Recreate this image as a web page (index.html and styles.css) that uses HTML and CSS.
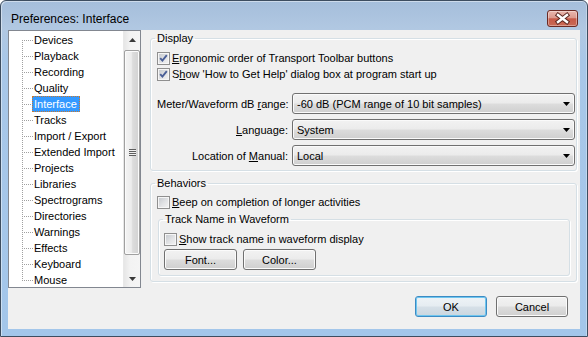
FILE: index.html
```html
<!DOCTYPE html>
<html>
<head>
<meta charset="utf-8">
<title>Preferences: Interface</title>
<link rel="stylesheet" href="styles.css">
</head>
<body>
<div class="window">
  <div class="titlebar">
    <span class="title">Preferences: Interface</span>
    <button class="close" aria-label="Close">
      <svg width="29" height="15" viewBox="0 0 29 15">
        <path d="M10 4 L19 11 M19 4 L10 11" stroke="#5a2620" stroke-width="4.4" stroke-linecap="square" fill="none"/>
        <path d="M10 4 L19 11 M19 4 L10 11" stroke="#ffffff" stroke-width="2.4" stroke-linecap="square" fill="none"/>
      </svg>
    </button>
  </div>
  <div class="client">
    <div class="main">
      <div class="tree">
        <ul class="tree-list">
          <li class="first"><span class="node">Devices</span></li>
          <li><span class="node">Playback</span></li>
          <li><span class="node">Recording</span></li>
          <li><span class="node">Quality</span></li>
          <li><span class="node selected">Interface</span></li>
          <li><span class="node">Tracks</span></li>
          <li><span class="node">Import / Export</span></li>
          <li><span class="node">Extended Import</span></li>
          <li><span class="node">Projects</span></li>
          <li><span class="node">Libraries</span></li>
          <li><span class="node">Spectrograms</span></li>
          <li><span class="node">Directories</span></li>
          <li><span class="node">Warnings</span></li>
          <li><span class="node">Effects</span></li>
          <li><span class="node">Keyboard</span></li>
          <li class="last"><span class="node">Mouse</span></li>
        </ul>
        <div class="scrollbar">
          <div class="sb-btn">
            <svg width="7" height="4" viewBox="0 0 7 4"><polygon points="0,4 7,4 3.5,0" fill="#3a3a3a"/></svg>
          </div>
          <div class="sb-track">
            <div class="sb-thumb"><span class="grip"></span></div>
          </div>
          <div class="sb-btn">
            <svg width="7" height="4" viewBox="0 0 7 4"><polygon points="0,0 7,0 3.5,4" fill="#3a3a3a"/></svg>
          </div>
        </div>
      </div>
      <div class="panel">
        <fieldset class="group display">
          <legend>Display</legend>
          <div class="check-row">
            <span class="checkbox"><svg width="11" height="11" viewBox="0 0 11 11"><path d="M2.2 5.2 L4.4 7.6 L8.8 2.2" stroke="#4a5f97" stroke-width="1.9" fill="none"/></svg></span>
            <span><u>E</u>rgonomic order of Transport Toolbar buttons</span>
          </div>
          <div class="check-row">
            <span class="checkbox"><svg width="11" height="11" viewBox="0 0 11 11"><path d="M2.2 5.2 L4.4 7.6 L8.8 2.2" stroke="#4a5f97" stroke-width="1.9" fill="none"/></svg></span>
            <span>S<u>h</u>ow 'How to Get Help' dialog box at program start up</span>
          </div>
          <div class="combo-grid">
            <span class="combo-label">Meter/Waveform dB <u>r</u>ange:</span>
            <div class="combo"><span>-60 dB (PCM range of 10 bit samples)</span><svg class="combo-arrow" width="7" height="4" viewBox="0 0 7 4"><polygon points="0,0 7,0 3.5,4" fill="#000"/></svg></div>
            <span class="combo-label"><u>L</u>anguage:</span>
            <div class="combo"><span>System</span><svg class="combo-arrow" width="7" height="4" viewBox="0 0 7 4"><polygon points="0,0 7,0 3.5,4" fill="#000"/></svg></div>
            <span class="combo-label">Location of <u>M</u>anual:</span>
            <div class="combo"><span>Local</span><svg class="combo-arrow" width="7" height="4" viewBox="0 0 7 4"><polygon points="0,0 7,0 3.5,4" fill="#000"/></svg></div>
          </div>
        </fieldset>
        <fieldset class="group behaviors">
          <legend>Behaviors</legend>
          <div class="check-row">
            <span class="checkbox"></span>
            <span><u>B</u>eep on completion of longer activities</span>
          </div>
          <fieldset class="group inner">
            <legend>Track Name in Waveform</legend>
            <div class="check-row">
              <span class="checkbox"></span>
              <span><u>S</u>how track name in waveform display</span>
            </div>
            <div class="btn-row">
              <button class="btn">Font...</button>
              <button class="btn">Color...</button>
            </div>
          </fieldset>
        </fieldset>
      </div>
    </div>
    <div class="footer">
      <button class="btn default">OK</button>
      <button class="btn">Cancel</button>
    </div>
  </div>
</div>
</body>
</html>
```

FILE: styles.css
```css
* { box-sizing: border-box; }

html, body {
  margin: 0;
  padding: 0;
}

body {
  width: 588px;
  height: 337px;
  overflow: hidden;
  background: #ffffff;
  font-family: "Liberation Sans", Arial, sans-serif;
  font-size: 11px;
  color: #000;
}

.window {
  width: 588px;
  height: 337px;
  border: 1px solid #3d4d60;
  border-radius: 6px 6px 0 0;
  background: linear-gradient(to bottom, #a5bedb 0px, #b1c8e2 28px, #a8c7e8 60px, #a3c6ea 100%);
  box-shadow: inset 1px 1px 0 rgba(255,255,255,0.45), inset -1px 0 0 rgba(255,255,255,0.3);
  padding: 0 7px 7px 7px;
  display: flex;
  flex-direction: column;
}

.titlebar {
  height: 29px;
  display: flex;
  align-items: flex-start;
  flex: none;
}

.title {
  margin-top: 11px;
  padding-left: 3px;
  line-height: 14px;
  font-size: 12px;
  color: #000;
}

.close {
  margin: 9px 2px 0 auto;
  width: 31px;
  height: 17px;
  padding: 0;
  border: 1px solid #6b2a24;
  border-radius: 3px;
  background: linear-gradient(to bottom, #e9b7ae 0%, #dc9a8e 45%, #c75a48 52%, #c96a56 100%);
  box-shadow: inset 0 0 0 1px rgba(255,255,255,0.35);
  display: flex;
  align-items: center;
  justify-content: center;
}

.close svg { display: block; }

.client {
  flex: 1;
  background: #f0f0f0;
  display: flex;
  flex-direction: column;
}

.main {
  display: flex;
  height: 258px;
  flex: none;
}

/* Tree */
.tree {
  width: 133px;
  height: 258px;
  border: 1px solid #828790;
  background: #ffffff;
  display: flex;
  flex: none;
}

.tree-list {
  list-style: none;
  margin: 0;
  padding: 1px 0 0 0;
  flex: 1;
}

.tree-list li {
  height: 16px;
  line-height: 16px;
  padding-left: 23px;
  white-space: nowrap;
  background-image:
    repeating-linear-gradient(to bottom, #a0a0a0 0 1px, transparent 1px 2px),
    repeating-linear-gradient(to right, #a0a0a0 0 1px, transparent 1px 2px);
  background-repeat: no-repeat, no-repeat;
  background-size: 1px 16px, 9px 1px;
  background-position: 13px 0, 15px 8px;
}

.tree-list li.first {
  background-size: 1px 8px, 9px 1px;
  background-position: 13px 8px, 15px 8px;
}

.tree-list li.last {
  background-size: 1px 9px, 9px 1px;
  background-position: 13px 0, 15px 8px;
}

.node {
  display: inline-block;
  height: 16px;
  padding: 0 2px 0 1px;
  border: 1px solid transparent;
  line-height: 14px;
}

.node.selected {
  background: #3399ff;
  color: #ffffff;
  border: 1px dotted #c8782f;
}

/* Scrollbar */
.scrollbar {
  width: 17px;
  flex: none;
  display: flex;
  flex-direction: column;
  background: linear-gradient(to right, #e6e6e6 0%, #f3f3f3 40%, #f5f5f5 100%);
  border-left: 1px solid #e8e8e8;
}

.sb-btn {
  height: 17px;
  flex: none;
  display: flex;
  align-items: center;
  justify-content: center;
}

.sb-btn svg { display: block; }

.sb-track {
  flex: 1;
  padding: 2px 0 0 0;
}

.sb-thumb {
  height: 205px;
  margin: 0 0 0 0;
  border: 1px solid #a0a0a0;
  border-radius: 2px;
  background: linear-gradient(to right, #f4f4f4 0%, #ececec 45%, #dcdcdc 55%, #d2d2d2 100%);
  box-shadow: inset 0 0 0 1px #fbfbfb;
  display: flex;
  align-items: center;
  justify-content: center;
}

.grip {
  width: 7px;
  height: 7px;
  background: repeating-linear-gradient(to bottom, #5e5e5e 0 1px, #f0f0f0 1px 2px);
}

/* Right panel */
.panel {
  margin-left: 9px;
  width: 427px;
  display: flex;
  flex-direction: column;
}

.group {
  margin: 0;
  border: 1px solid #d5dfe5;
  border-radius: 3px;
  box-shadow: inset 1px 1px 0 #ffffff, 1px 1px 0 #ffffff;
  padding: 4px 6px 4px 6px;
  min-width: 0;
}

.group legend {
  padding: 0 2px;
  margin-left: -2px;
  line-height: 16px;
  height: 16px;
}

.check-row {
  display: flex;
  align-items: center;
  height: 16px;
  white-space: nowrap;
}

.checkbox {
  width: 13px;
  height: 13px;
  flex: none;
  margin-right: 2px;
  border: 1px solid #8f8f8f;
  background: linear-gradient(135deg, #c3c7cc 0%, #e2e3e5 55%, #f4f4f4 100%);
  box-shadow: inset 0 0 0 1px #f6f6f6;
  display: flex;
  align-items: center;
  justify-content: center;
}

.checkbox svg { display: block; }

.combo-grid {
  display: grid;
  grid-template-columns: 131px 1fr;
  grid-auto-rows: 21px;
  column-gap: 4px;
  row-gap: 5px;
  margin-top: 11px;
  margin-right: -5px;
}

.combo-label {
  text-align: right;
  align-self: center;
  white-space: nowrap;
}

.combo {
  display: flex;
  align-items: center;
  padding: 0 4px 0 4px;
  border: 1px solid #707070;
  border-radius: 3px;
  background: linear-gradient(to bottom, #f2f2f2 0%, #ebebeb 49%, #dddddd 51%, #cfcfcf 100%);
  box-shadow: inset 0 0 0 1px #fafafa;
  white-space: nowrap;
}

.combo-arrow {
  margin-left: auto;
  display: block;
}

.behaviors {
  margin-top: 4px;
  padding: 3px 6px 5px 6px;
}

.group.inner {
  margin: 1px 0 0 1px;
  padding: 4px 5px 5px 5px;
}

.group.inner legend {
  margin-left: -1px;
}

.btn-row {
  display: flex;
  gap: 6px;
  margin-top: 2px;
}

.btn {
  width: 73px;
  height: 21px;
  padding: 0;
  font-family: inherit;
  font-size: 11px;
  color: #000;
  border: 1px solid #707070;
  border-radius: 3px;
  background: linear-gradient(to bottom, #f2f2f2 0%, #ebebeb 49%, #dddddd 51%, #cfcfcf 100%);
  box-shadow: inset 0 0 0 1px #fbfbfb;
}

.btn.default {
  border-color: #3c8bc4;
  background: linear-gradient(to bottom, #eef3f7 0%, #e5ecf1 49%, #d6e0e8 51%, #cad6df 100%);
  box-shadow: inset 0 0 0 1px #6fc6ef;
}

.footer {
  margin-top: auto;
  display: flex;
  justify-content: flex-end;
  gap: 9px;
  padding: 0 12px 12px 0;
}

.footer .btn {
  width: 72px;
}
```
